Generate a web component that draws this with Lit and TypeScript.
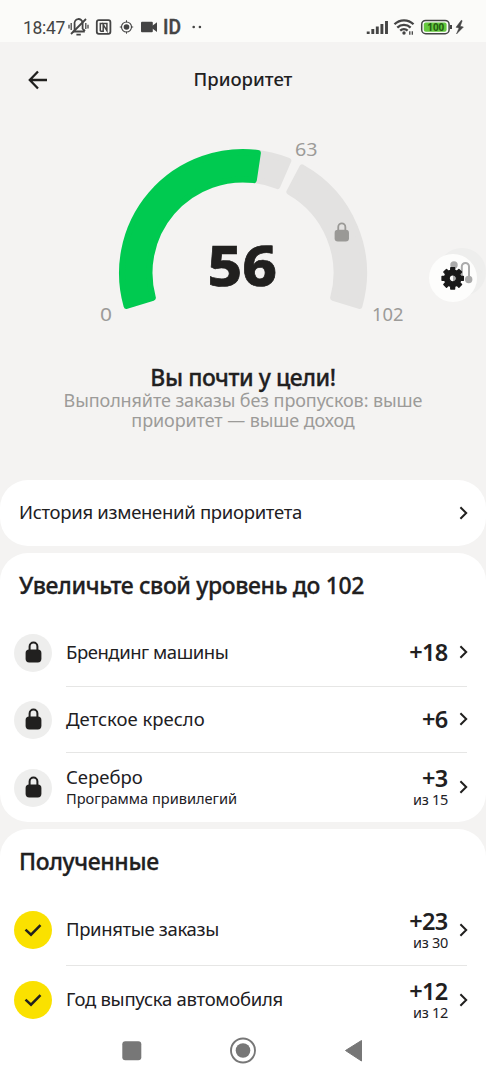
import { LitElement, html, css, svg, nothing } from "lit";
import { customElement, property } from "lit/decorators.js";

interface Entry {
  label: string;
  tracking: number;
  note?: string;
  value: string;
  of?: string;
}

const LOCKED: Entry[] = [
  { label: "Брендинг машины", tracking: -0.45, value: "+18" },
  { label: "Детское кресло", tracking: 0, value: "+6" },
  { label: "Серебро", tracking: 0, note: "Программа привилегий", value: "+3", of: "из 15" },
];

const EARNED: Entry[] = [
  { label: "Принятые заказы", tracking: -0.35, value: "+23", of: "из 30" },
  { label: "Год выпуска автомобиля", tracking: -0.27, value: "+12", of: "из 12" },
];

const lockShape = svg`
  <path d="M4.6 9V5.5a3.9 3.9 0 0 1 7.8 0V9" fill="none" stroke="currentColor" stroke-width="2"/>
  <rect x="0.6" y="8.4" width="15.800" height="13" rx="3.6" fill="currentColor"/>`;

const chevron = html`<svg class="chevron" width="9" height="14" viewBox="0 0 9 14">
  <path d="M1.4 1.3 7.2 7 1.4 12.7" fill="none" stroke="currentColor" stroke-width="2"/>
</svg>`;

// Ring segment with rounded corners; angles are degrees clockwise from the top.
function segment(from: number, to: number, color: string) {
  const cx = 153, cy = 143, inset = 3;
  const outer = 124 - inset, inner = 90.5 + inset;
  const point = (r: number, deg: number, side: number) => {
    const a = (deg * Math.PI) / 180 + side * Math.asin(inset / r);
    return `${(cx + r * Math.sin(a)).toFixed(2)} ${(cy - r * Math.cos(a)).toFixed(2)}`;
  };
  const d = `M${point(outer, from, 1)}A${outer} ${outer} 0 0 1 ${point(outer, to, -1)}`
    + `L${point(inner, to, -1)}A${inner} ${inner} 0 0 0 ${point(inner, from, 1)}Z`;
  return svg`<path d=${d} fill=${color} stroke=${color} stroke-width="6" stroke-linejoin="round"/>`;
}

function gearPath(cx: number, cy: number) {
  let d = "";
  for (let i = 0; i < 8; i++) {
    const steps: [number, number][] = [[-14, 8.2], [-10, 10.8], [10, 10.8], [14, 8.2]];
    for (const [off, r] of steps) {
      const a = ((i * 45 + off) * Math.PI) / 180;
      d += `${d ? "L" : "M"}${(cx + r * Math.sin(a)).toFixed(2)} ${(cy - r * Math.cos(a)).toFixed(2)}`;
    }
  }
  return `${d}ZM${cx - 3.6} ${cy}a3.6 3.6 0 1 0 7.2 0a3.6 3.6 0 1 0-7.2 0Z`;
}

@customElement("status-bar")
class StatusBar extends LitElement {
  static styles = css`
    :host { display: block; flex: none; height: 42px; background: #fbfbf9; color: #444; }
    .bar { display: flex; justify-content: space-between; height: 42px; }
    svg { display: block; }
    .left { display: flex; padding-left: 23px; }
    .time { font: 400 17.5px/22px Roboto, sans-serif; padding-top: 17px; width: 45px; letter-spacing: -0.3px; }
    .battery { font: 700 10px "Noto Sans", sans-serif; fill: #245e12; }
    .id { font: 500 20px Roboto, sans-serif; fill: #444; }
  `;
  render() {
    return html`<div class="bar">
      <div class="left">
        <span class="time">18:47</span>
        <svg width="140" height="42" viewBox="68 0 140 42" fill="none" stroke="#444">
          <path d="M72.800 31.500h12M74.600 31v-6.500a4 4.500 0 0 1 8-1.800v6l2.400 2.300M78.500 18.200v1.500M76.400 34.600h4.400" stroke-width="1.800"/>
          <path d="M71 34 86 19" stroke-width="1.800"/>
          <path d="M71.200 23v7M69 24.700v3.800M85.800 23v6M88 24.700v3.800" stroke-width="1.300"/>
          <rect x="96.800" y="20.200" width="13.600" height="13.600" rx="2" stroke-width="1.800"/>
          <path d="M100.300 31.200v-7.600l6.600 0v7l-3.700-6v6.600h-2.900" stroke-width="1.500"/>
          <circle cx="126.500" cy="27" r="5" stroke-width="1.100"/>
          <circle cx="126.500" cy="27" r="2.800" fill="#444" stroke="none"/>
          <path d="M126.500 20.300v2M126.500 31.700v2M119.800 27h2M131.200 27h2" stroke-width="1"/>
          <rect x="141" y="21.800" width="11.800" height="10.400" rx="1" fill="#444" stroke="none"/>
          <path d="M152 26 157 22.300v9.700L152 28.300Z" fill="#444" stroke="none"/>
          <text class="id" x="163" y="34" textLength="18" lengthAdjust="spacingAndGlyphs" stroke="#444" stroke-width="0.400">ID</text>
          <circle cx="193.700" cy="27" r="1.300" fill="#444" stroke="none"/>
          <circle cx="199.900" cy="27" r="1.300" fill="#444" stroke="none"/>
        </svg>
      </div>
      <svg width="126" height="42" viewBox="360 0 126 42" fill="none" stroke="#444">
        <path d="M368.200 34v-2.500M372.800 34v-5M377.300 34v-7.500M381.900 34v-10M386.500 34V21" stroke-width="2.900"/>
        <path d="M394.500 24.200a13.500 13.500 0 0 1 19 0M397.300 27.600a9.500 9.500 0 0 1 13.300 0M400.200 30.700a5.500 5.500 0 0 1 7.400 0" stroke-width="2.300"/>
        <circle cx="404" cy="33" r="1.700" fill="#444" stroke="none"/>
        <path d="M409.800 31.300v3.400M412.300 31.300v3.400" stroke-width="1.300"/>
        <rect x="421.700" y="20.400" width="27.400" height="13.300" rx="4" stroke-width="1.500"/>
        <rect x="423.800" y="22.500" width="22.800" height="9.200" rx="2" fill="#65c83e" stroke="none"/>
        <text class="battery" x="427.300" y="30.800" stroke="none" textLength="17" lengthAdjust="spacingAndGlyphs">100</text>
        <path d="M451 25v4" stroke-width="2"/>
        <path d="M461.300 20.300 456 27.300l3 .6L456.500 34 463.400 27l-3.200-.8 2-5.400Z" fill="#444" stroke="#444" stroke-width="0.500"/>
      </svg>
    </div>`;
  }
}

@customElement("priority-gauge")
class PriorityGauge extends LitElement {
  static styles = css`
    :host { display: block; width: 320px; height: 200px; }
    svg { display: block; }
    .bound { font: 400 18.5px "Noto Sans", sans-serif; fill: #9c9b99; }
    .score { font: 800 55px "Noto Sans", sans-serif; fill: #21201f; stroke: #21201f; stroke-width: 0.7px; }
    .lock { color: #9a9996; }
  `;
  render() {
    return html`<svg width="320" height="200" viewBox="0 0 320 200">
      ${segment(-10, 23.4, "#e3e2e1")}
      ${segment(27.9, 107.2, "#e3e2e1")}
      ${segment(-107.2, 8.5, "#00ca50")}
      <text class="bound" x="10" y="190.500" textLength="12" lengthAdjust="spacingAndGlyphs">0</text>
      <text class="bound" x="205" y="25.800" textLength="22.500" lengthAdjust="spacingAndGlyphs">63</text>
      <text class="bound" x="282" y="190.500" textLength="31.500" lengthAdjust="spacingAndGlyphs">102</text>
      <text class="score" x="117.500" y="156" textLength="69.500" lengthAdjust="spacingAndGlyphs">56</text>
      <svg class="lock" x="243.800" y="92" width="16" height="20" viewBox="0 0 17 22">${lockShape}</svg>
    </svg>`;
  }
}

@customElement("entry-row")
class EntryRow extends LitElement {
  @property({ attribute: false }) entry!: Entry;
  @property({ type: Boolean }) earned = false;

  static styles = css`
    :host { display: flex; align-items: center; height: 100%; padding-left: 14px; color: #21201f; }
    svg { display: block; }
    .badge { width: 38px; height: 38px; border-radius: 50%; background: #eeeeed; display: grid; place-items: center; margin-right: 14px; flex: none; }
    .badge.earned { background: #fae100; }
    .badge svg { margin-bottom: 1px; }
    .body { flex: 1; height: 100%; display: flex; align-items: center; justify-content: space-between; margin-right: 19px; border-bottom: 1.5px solid #e6e6e5; box-sizing: border-box; }
    :host([last]) .body { border-bottom-color: transparent; }
    .text { padding-bottom: 1px; }
    .label { font-size: 18.5px; line-height: 22px; white-space: nowrap; }
    .note { font-size: 14.6px; line-height: 20px; white-space: nowrap; }
    .end { display: flex; align-items: center; gap: 11px; }
    .amount { text-align: right; white-space: nowrap; }
    .value { font-size: 23.5px; font-weight: 600; line-height: 24px; letter-spacing: -0.7px; padding-right: 0.5px; }
    .of { font-size: 14.5px; line-height: 18px; letter-spacing: -0.3px; }
    .chevron { margin-right: -1px; }
  `;
  render() {
    const e = this.entry;
    return html`
      <span class="badge ${this.earned ? "earned" : ""}">
        ${this.earned
          ? html`<svg width="18" height="14" viewBox="0 0 18 14"><path d="M1.5 6.7 7 11.7 16.5 2.2" fill="none" stroke="currentColor" stroke-width="2.5"/></svg>`
          : html`<svg width="17" height="22" viewBox="0 0 17 22">${lockShape}</svg>`}
      </span>
      <div class="body">
        <div class="text">
          <div class="label" style="letter-spacing:${e.tracking}px">${e.label}</div>
          ${e.note ? html`<div class="note">${e.note}</div>` : nothing}
        </div>
        <div class="end">
          <div class="amount">
            <div class="value">${e.value}</div>
            ${e.of ? html`<div class="of">${e.of}</div>` : nothing}
          </div>
          ${chevron}
        </div>
      </div>`;
  }
}

@customElement("app-root")
class AppRoot extends LitElement {
  static styles = css`
    :host { display: block; position: relative; width: 486px; height: 1080px; overflow: hidden; background: #f4f3f2; color: #21201f; font-family: "Noto Sans", sans-serif; }
    svg { display: block; }
    .page { display: flex; flex-direction: column; height: 1080px; }
    .header { display: grid; grid-template-columns: 76px 1fr 76px; align-items: center; height: 75px; flex: none; }
    .back { margin-left: 28px; }
    .title { text-align: center; font-size: 18.5px; font-weight: 500; padding-bottom: 2px; }
    .gauge { height: 248px; flex: none; padding: 13px 0 0 90px; box-sizing: border-box; }
    .summary { height: 115px; flex: none; text-align: center; }
    .goal { font-size: 23px; font-weight: 500; line-height: 25px; letter-spacing: -0.45px; -webkit-text-stroke: 0.3px currentColor; }
    .hint { font-size: 18px; line-height: 20px; color: #9c9b99; letter-spacing: -0.1px; }
    .card { background: #fff; border-radius: 28px; flex: none; }
    .history { display: flex; align-items: center; justify-content: space-between; height: 66px; padding: 0 18px 0 19px; font-size: 18.5px; letter-spacing: -0.3px; }
    .history span { padding-bottom: 3px; }
    .locked { margin-top: 7px; height: 269px; display: grid; grid-template-rows: 66px 67.5px 66.5px 69px; }
    .obtained { margin-top: 7px; height: 206px; border-radius: 28px 28px 0 0; display: grid; grid-template-rows: 66px 70.5px 69.5px; }
    .heading { padding-left: 19px; font-size: 23px; font-weight: 500; line-height: 65px; white-space: nowrap; letter-spacing: -0.37px; -webkit-text-stroke: 0.3px currentColor; }
    .nav { flex: none; height: 45px; box-sizing: border-box; background: #fff; display: flex; align-items: center; justify-content: center; padding-bottom: 15px; }
    .debug { position: absolute; top: 246px; left: 428px; }
  `;

  private rows(list: Entry[], earned: boolean) {
    return list.map((entry, i) => html`<entry-row .entry=${entry} ?earned=${earned} ?last=${i === list.length - 1}></entry-row>`);
  }

  render() {
    return html`<div class="page">
      <status-bar></status-bar>
      <header class="header">
        <svg class="back" width="20" height="20" viewBox="0 0 20 20"><path d="M10 1.500 1.800 10 10 18.500M2 10h17" fill="none" stroke="#21201f" stroke-width="2.300"/></svg>
        <div class="title">Приоритет</div>
      </header>
      <div class="gauge"><priority-gauge></priority-gauge></div>
      <section class="summary">
        <div class="goal">Вы почти у цели!</div>
        <div class="hint">Выполняйте заказы без пропусков: выше<br>приоритет — выше доход</div>
      </section>
      <section class="card history"><span>История изменений приоритета</span>${chevron}</section>
      <section class="card locked">
        <div class="heading">Увеличьте свой уровень до 102</div>
        ${this.rows(LOCKED, false)}
      </section>
      <section class="card obtained">
        <div class="heading">Полученные</div>
        ${this.rows(EARNED, true)}
      </section>
      <nav class="nav">
        <svg width="260" height="30" viewBox="113 1035 260 30" fill="#777">
          <rect x="122.300" y="1041.300" width="19" height="19" rx="3"/>
          <circle cx="243" cy="1050.500" r="12" fill="none" stroke="#777" stroke-width="1.900"/>
          <circle cx="243" cy="1050.500" r="7.300"/>
          <path d="M345.500 1050.500 361.500 1040.500V1061Z" stroke="#777" stroke-linejoin="round"/>
        </svg>
      </nav>
      <svg class="debug" width="58" height="58" viewBox="428 246 58 58">
        <circle cx="462" cy="272" r="24" fill="#eeeeed"/>
        <circle cx="453" cy="278" r="24" fill="#fdfdfc"/>
        <path d="M454 266v15M461.800 279v-12.500a3.600 3.600 0 0 1 7.200 0V279" fill="none" stroke="#aaa" stroke-width="2"/>
        <circle cx="454" cy="265" r="3.700" fill="#aaa"/>
        <circle cx="468.700" cy="279.500" r="3.700" fill="#aaa"/>
        <path d=${gearPath(452.7, 278.3)} fill="#191919" stroke="#191919" stroke-width="1.400" stroke-linejoin="round" fill-rule="evenodd"/>
      </svg>
    </div>`;
  }
}
